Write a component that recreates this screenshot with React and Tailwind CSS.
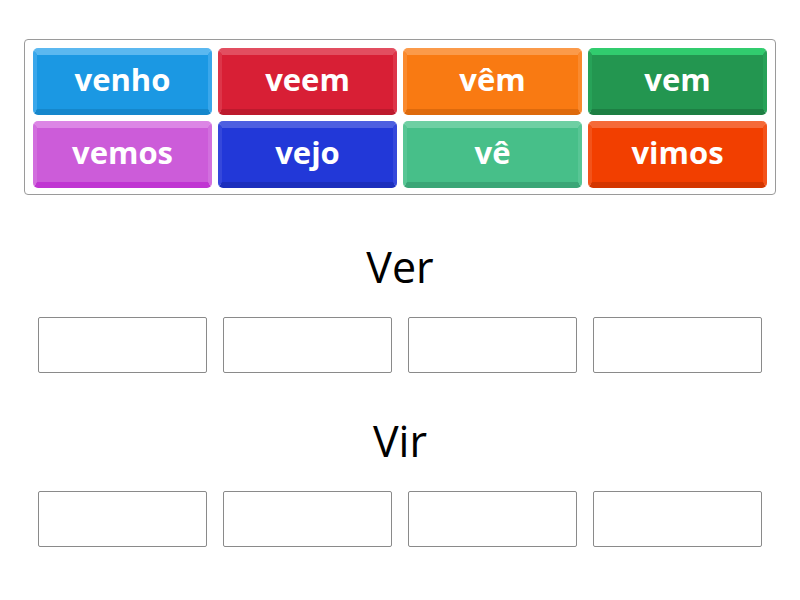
const tiles = [
  { word: "venho", cls: "bg-[#1b98e3] border-t-[#5bb8f0] border-x-[#3aa7eb] border-b-[#1587cc]" },
  { word: "veem", cls: "bg-[#d81f35] border-t-[#e24e60] border-x-[#dd3549] border-b-[#bd1a2d]" },
  { word: "vêm", cls: "bg-[#f97a12] border-t-[#fb9a4a] border-x-[#fa8a2e] border-b-[#de6a0c]" },
  { word: "vem", cls: "bg-[#239650] border-t-[#31cc6e] border-x-[#27a258] border-b-[#1d7f43]" },
  { word: "vemos", cls: "bg-[#cc5cd9] border-t-[#dc86e5] border-x-[#d26fde] border-b-[#c035d2]" },
  { word: "vejo", cls: "bg-[#2238d8] border-t-[#4d5fe0] border-x-[#3548db] border-b-[#1c2fbd]" },
  { word: "vê", cls: "bg-[#47bf89] border-t-[#6fcfa3] border-x-[#58c695] border-b-[#3ba677]" },
  { word: "vimos", cls: "bg-[#f23f00] border-t-[#f56a38] border-x-[#f3531a] border-b-[#d43600]" },
];

function Slots() {
  return (
    <div className="grid grid-cols-4 gap-4 px-[38px]">
      {[0, 1, 2, 3].map((i) => (
        <div key={i} className="h-[56px] border border-[#8a8a8a] rounded-[2px] bg-white" />
      ))}
    </div>
  );
}

export default function App() {
  return (
    <div className="w-[800px] h-[600px] bg-white overflow-hidden" style={{ fontFamily: '"Open Sans", sans-serif' }}>
      <div className="pt-[39px] px-[24px]">
        <div className="border border-[#9a9a9a] rounded-[4px] pl-[8px] pr-[8px] pt-[8px] pb-[6px]">
          <div className="grid grid-cols-4 gap-[6px]">
            {tiles.map((t) => (
              <div
                key={t.word}
                className={`h-[67px] rounded-[5px] border-t-[7px] border-x-[4px] border-b-[6px] flex items-center justify-center text-white font-bold text-[31px] leading-none pb-[5px] ${t.cls}`}
              >
                {t.word}
              </div>
            ))}
          </div>
        </div>
      </div>

      <div className="text-center text-[43px] leading-none text-black mt-[50px] mb-[29px]">Ver</div>
      <Slots />

      <div className="text-center text-[43px] leading-none text-black mt-[46px] mb-[29px]">Vir</div>
      <Slots />
    </div>
  );
}
